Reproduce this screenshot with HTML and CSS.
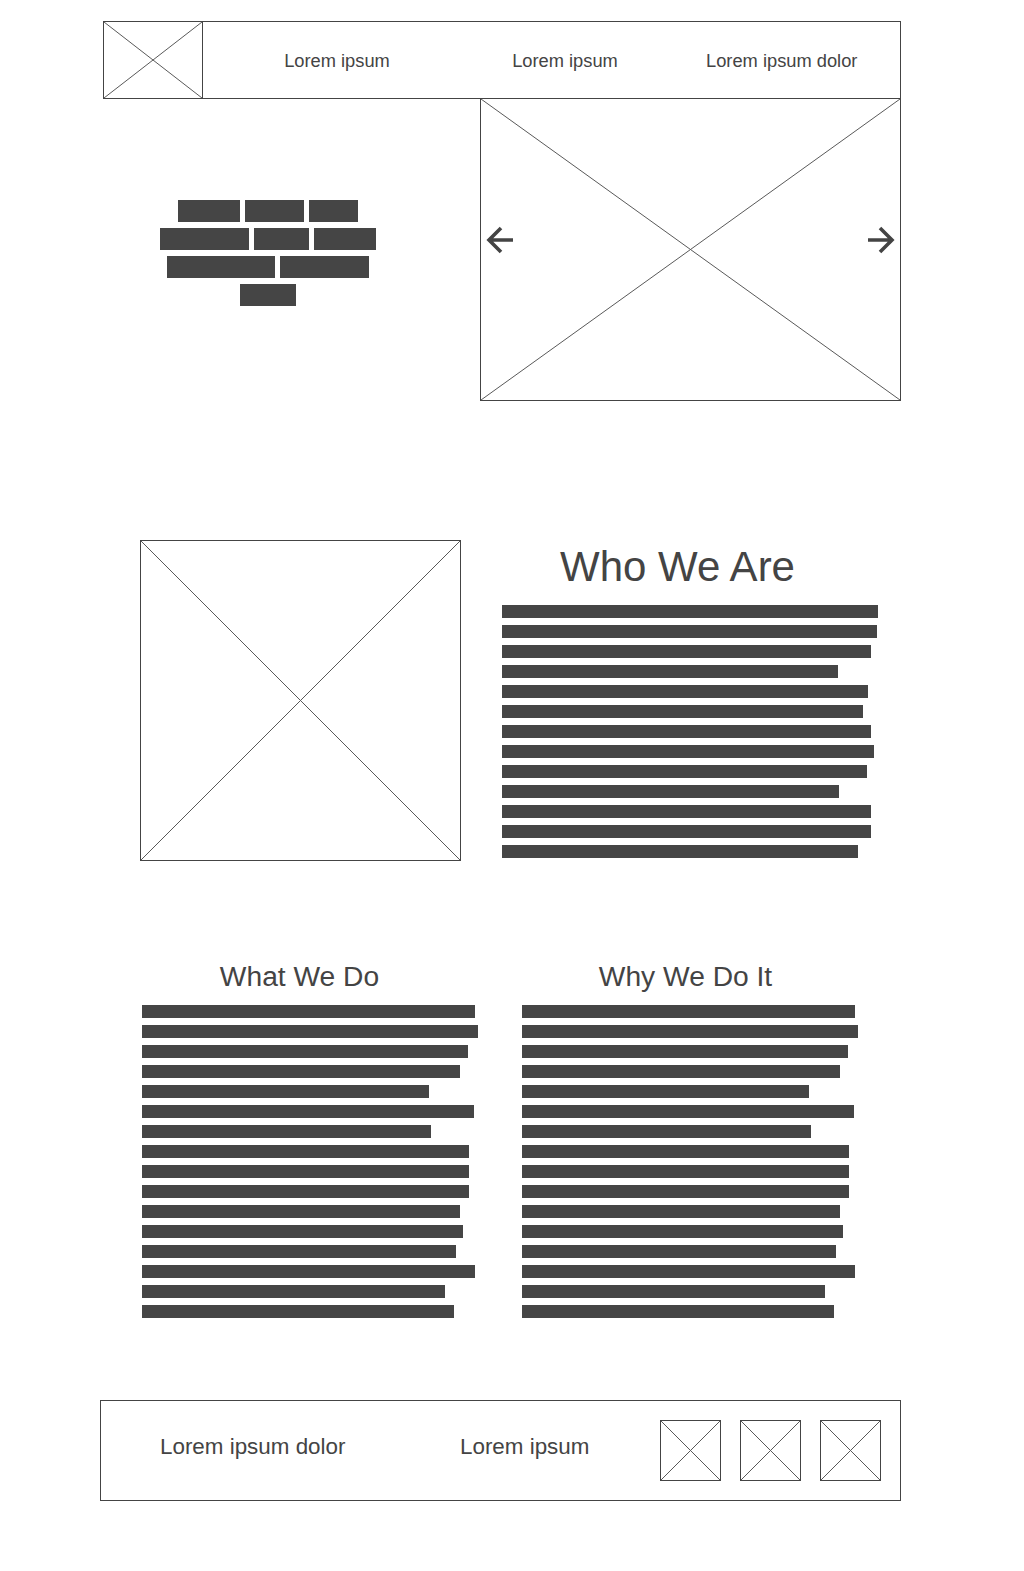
FILE: index.html
```html
<!DOCTYPE html>
<html lang="en">
<head>
  <meta charset="UTF-8">
  <meta name="viewport" content="width=device-width, initial-scale=1.0">
  <title>Wireframe</title>
  <link rel="stylesheet" href="styles.css">
</head>
<body>
  <div class="page">

    <header class="topbar">
      <div class="logo">
        <svg class="cross" viewBox="0 0 100 100" preserveAspectRatio="none"><line x1="0" y1="0" x2="100" y2="100"/><line x1="100" y1="0" x2="0" y2="100"/></svg>
      </div>
      <nav class="menu">
        <a href="#">Lorem ipsum</a>
        <a href="#">Lorem ipsum</a>
        <a href="#">Lorem ipsum dolor</a>
      </nav>
    </header>

    <section class="hero">
      <div class="hero-brand">
        <div class="brick-row">
          <span class="brick" style="width: 62px"></span>
          <span class="brick" style="width: 59px"></span>
          <span class="brick" style="width: 49px"></span>
        </div>
        <div class="brick-row">
          <span class="brick" style="width: 89px"></span>
          <span class="brick" style="width: 55px"></span>
          <span class="brick" style="width: 62px"></span>
        </div>
        <div class="brick-row">
          <span class="brick" style="width: 108px"></span>
          <span class="brick" style="width: 89px"></span>
        </div>
        <div class="brick-row">
          <span class="brick" style="width: 56px"></span>
        </div>
      </div>
      <div class="carousel placeholder">
        <svg class="cross" viewBox="0 0 100 100" preserveAspectRatio="none"><line x1="0" y1="0" x2="100" y2="100"/><line x1="100" y1="0" x2="0" y2="100"/></svg>
        <svg class="arrow arrow-prev" viewBox="0 0 28 28"><path d="M27 14H3M15 2L3 14L15 26"/></svg>
        <svg class="arrow arrow-next" viewBox="0 0 28 28"><path d="M1 14H25M13 2L25 14L13 26"/></svg>
      </div>
    </section>

    <section class="about">
      <div class="about-img placeholder">
        <svg class="cross" viewBox="0 0 100 100" preserveAspectRatio="none"><line x1="0" y1="0" x2="100" y2="100"/><line x1="100" y1="0" x2="0" y2="100"/></svg>
      </div>
      <div class="about-text">
        <h2>Who We Are</h2>
        <div class="lines">
          <span class="line" style="width: 376px"></span>
          <span class="line" style="width: 375px"></span>
          <span class="line" style="width: 369px"></span>
          <span class="line" style="width: 336px"></span>
          <span class="line" style="width: 366px"></span>
          <span class="line" style="width: 361px"></span>
          <span class="line" style="width: 369px"></span>
          <span class="line" style="width: 372px"></span>
          <span class="line" style="width: 365px"></span>
          <span class="line" style="width: 337px"></span>
          <span class="line" style="width: 369px"></span>
          <span class="line" style="width: 369px"></span>
          <span class="line" style="width: 356px"></span>
        </div>
      </div>
    </section>

    <section class="columns">
      <div class="col col-what">
        <h3>What We Do</h3>
        <div class="lines">
          <span class="line" style="width: 333px"></span>
          <span class="line" style="width: 336px"></span>
          <span class="line" style="width: 326px"></span>
          <span class="line" style="width: 318px"></span>
          <span class="line" style="width: 287px"></span>
          <span class="line" style="width: 332px"></span>
          <span class="line" style="width: 289px"></span>
          <span class="line" style="width: 327px"></span>
          <span class="line" style="width: 327px"></span>
          <span class="line" style="width: 327px"></span>
          <span class="line" style="width: 318px"></span>
          <span class="line" style="width: 321px"></span>
          <span class="line" style="width: 314px"></span>
          <span class="line" style="width: 333px"></span>
          <span class="line" style="width: 303px"></span>
          <span class="line" style="width: 312px"></span>
        </div>
      </div>
      <div class="col col-why">
        <h3>Why We Do It</h3>
        <div class="lines">
          <span class="line" style="width: 333px"></span>
          <span class="line" style="width: 336px"></span>
          <span class="line" style="width: 326px"></span>
          <span class="line" style="width: 318px"></span>
          <span class="line" style="width: 287px"></span>
          <span class="line" style="width: 332px"></span>
          <span class="line" style="width: 289px"></span>
          <span class="line" style="width: 327px"></span>
          <span class="line" style="width: 327px"></span>
          <span class="line" style="width: 327px"></span>
          <span class="line" style="width: 318px"></span>
          <span class="line" style="width: 321px"></span>
          <span class="line" style="width: 314px"></span>
          <span class="line" style="width: 333px"></span>
          <span class="line" style="width: 303px"></span>
          <span class="line" style="width: 312px"></span>
        </div>
      </div>
    </section>

    <footer class="footer">
      <span class="footer-link footer-link-wide">Lorem ipsum dolor</span>
      <span class="footer-link">Lorem ipsum</span>
      <div class="footer-icons">
        <div class="footer-icon placeholder">
          <svg class="cross" viewBox="0 0 100 100" preserveAspectRatio="none"><line x1="0" y1="0" x2="100" y2="100"/><line x1="100" y1="0" x2="0" y2="100"/></svg>
        </div>
        <div class="footer-icon placeholder">
          <svg class="cross" viewBox="0 0 100 100" preserveAspectRatio="none"><line x1="0" y1="0" x2="100" y2="100"/><line x1="100" y1="0" x2="0" y2="100"/></svg>
        </div>
        <div class="footer-icon placeholder">
          <svg class="cross" viewBox="0 0 100 100" preserveAspectRatio="none"><line x1="0" y1="0" x2="100" y2="100"/><line x1="100" y1="0" x2="0" y2="100"/></svg>
        </div>
      </div>
    </footer>

  </div>
</body>
</html>
```

FILE: styles.css
```css
body {
  margin: 0;
  font-family: "Liberation Sans", Arial, sans-serif;
  color: #444;
  background: #fff;
}

.page {
  width: 801px;
  padding: 21px 0 60px 100px;
}

/* image placeholders: box with a cross */
.placeholder {
  border: 1px solid #444;
  box-sizing: border-box;
}

.cross {
  display: block;
  width: 100%;
  height: 100%;
}

.cross line {
  stroke: #595959;
  stroke-width: 1;
  vector-effect: non-scaling-stroke;
}

/* top bar */
.topbar {
  display: flex;
  height: 78px;
  margin-left: 3px;
  border: 1px solid #444;
  box-sizing: border-box;
}

.logo {
  width: 99px;
  border-right: 1px solid #444;
  box-sizing: border-box;
}

.menu {
  flex: 1;
  display: grid;
  grid-template-columns: 268px 188px 1fr;
  align-items: center;
  padding-top: 2px;
}

.menu a {
  font-size: 18.3px;
  color: #444;
  text-decoration: none;
  text-align: center;
}

.menu a:last-child {
  text-align: left;
  padding-left: 47px;
}

/* hero */
.hero {
  display: flex;
  margin: -1px 0 0 3px;
}

.hero-brand {
  flex: 1;
  display: flex;
  flex-direction: column;
  align-items: center;
  justify-content: center;
  gap: 6px;
  padding: 7px 47px 0 0;
}

.brick-row {
  display: flex;
  gap: 5px;
}

.brick {
  height: 22px;
  background: #454545;
}

.carousel {
  position: relative;
  width: 421px;
  height: 303px;
}

.arrow {
  position: absolute;
  top: 127px;
  width: 28px;
  height: 28px;
}

.arrow path {
  fill: none;
  stroke: #444;
  stroke-width: 3.6;
}

.arrow-prev {
  left: 5px;
}

.arrow-next {
  right: 5px;
}

/* who we are */
.about {
  display: flex;
  gap: 41px;
  margin-top: 139px;
  padding-left: 40px;
}

.about-img {
  width: 321px;
  height: 321px;
}

.about-text {
  width: 376px;
}

.about-text h2 {
  margin: 3px 0 15px;
  padding-right: 25px;
  font-size: 42px;
  line-height: 47px;
  font-weight: normal;
  text-align: center;
}

.lines {
  display: flex;
  flex-direction: column;
  align-items: flex-start;
  gap: 7px;
}

.line {
  height: 13px;
  background: #454545;
}

/* two columns */
.columns {
  display: flex;
  gap: 44px;
  margin-top: 99px;
  padding-left: 42px;
}

.col {
  width: 336px;
}

.col h3 {
  margin: 0 0 13px;
  font-size: 28.2px;
  line-height: 32px;
  font-weight: normal;
  text-align: center;
}

.col-what h3 {
  padding-right: 21px;
}

.col-why h3 {
  padding-right: 9px;
}

/* footer */
.footer {
  display: flex;
  align-items: center;
  height: 101px;
  margin-top: 82px;
  padding-left: 59px;
  border: 1px solid #444;
  box-sizing: border-box;
  font-size: 22.4px;
}

.footer-link {
  width: 200px;
  margin-bottom: 7px;
}

.footer-link-wide {
  width: 300px;
}

.footer-icons {
  display: flex;
  gap: 19px;
}

.footer-icon {
  width: 61px;
  height: 61px;
}
```
